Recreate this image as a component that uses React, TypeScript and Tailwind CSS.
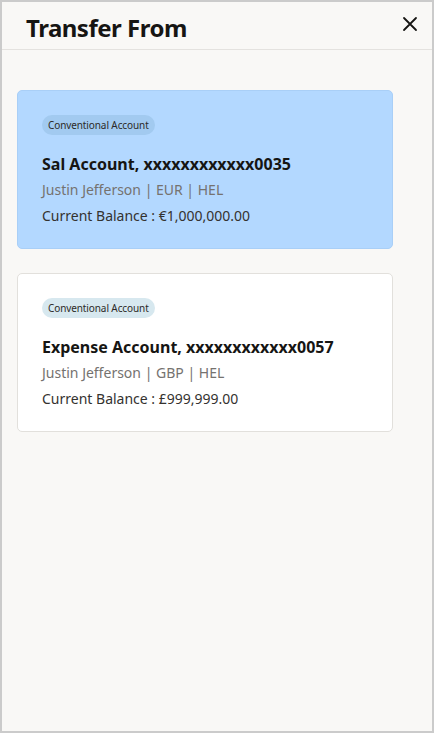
import React from "react";

type Account = {
  name: string;
  number: string;
  owner: string;
  currency: string;
  branch: string;
  balance: string;
  selected?: boolean;
};

const accounts: Account[] = [
  {
    name: "Sal Account",
    number: "xxxxxxxxxxxx0035",
    owner: "Justin Jefferson",
    currency: "EUR",
    branch: "HEL",
    balance: "€1,000,000.00",
    selected: true,
  },
  {
    name: "Expense Account",
    number: "xxxxxxxxxxxx0057",
    owner: "Justin Jefferson",
    currency: "GBP",
    branch: "HEL",
    balance: "£999,999.00",
  },
];

function AccountCard({ account }: { account: Account }) {
  const selected = account.selected;
  return (
    <div
      className={
        selected
          ? "w-[376px] h-[159px] rounded-[5px] border border-[#a9cff7] bg-[#b3d8ff] px-[24px] pt-[24px] flex flex-col items-start"
          : "w-[376px] h-[159px] rounded-[5px] border border-[#e2e0dc] bg-white px-[24px] pt-[24px] flex flex-col items-start"
      }
    >
      <div
        className={
          selected
            ? "flex h-[20px] items-center rounded-full bg-[#a2caf0] px-[6px] text-[10px] tracking-[-0.1px] text-[#2c2a28]"
            : "flex h-[20px] items-center rounded-full bg-[#d7e8ef] px-[6px] text-[10px] tracking-[-0.1px] text-[#2c2a28]"
        }
      >
        Conventional Account
      </div>
      <div className="mt-[18px] text-[16px] font-bold leading-[22px] text-[#161513]">
        {account.name}, {account.number}
      </div>
      <div className="mt-[5px] text-[14px] leading-[20px] text-[#75726f]">
        {account.owner} | {account.currency} | {account.branch}
      </div>
      <div className="mt-[6px] text-[14px] leading-[20px] text-[#34322f]">
        Current Balance : {account.balance}
      </div>
    </div>
  );
}

export default function App() {
  return (
    <div
      className="w-[434px] h-[733px] border-2 border-[#cbcbcb] bg-[#f9f8f6] flex flex-col"
      style={{ fontFamily: '"Noto Sans", "Open Sans", sans-serif' }}
    >
      <div className="h-[48px] shrink-0 flex items-center justify-between border-b border-[#e4e2df] pl-[24px] pr-[10px]">
        <h1 className="pt-[4px] text-[24px] font-bold leading-none text-[#161513] tracking-[-0.5px]">
          Transfer From
        </h1>
        <button className="w-[24px] h-[24px] mb-[4px] flex items-center justify-center text-[#161513]">
          <svg width="16" height="16" viewBox="0 0 16 16" fill="none">
            <path
              d="M2 2L14 14M14 2L2 14"
              stroke="currentColor"
              strokeWidth="1.8"
              strokeLinecap="round"
            />
          </svg>
        </button>
      </div>
      <div className="flex flex-col gap-[24px] pl-[15px] pt-[40px]">
        {accounts.map((a) => (
          <AccountCard key={a.number} account={a} />
        ))}
      </div>
    </div>
  );
}
